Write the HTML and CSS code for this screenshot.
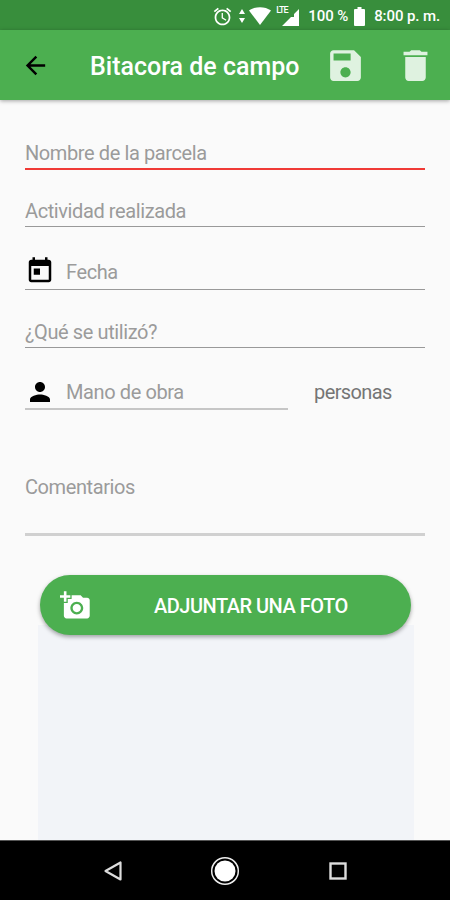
FILE: index.html
```html
<!DOCTYPE html>
<html lang="es">
<head>
    <meta charset="UTF-8">
    <meta name="viewport" content="width=device-width, initial-scale=1.0">
    <title>Bitacora de campo</title>
    <link rel="stylesheet" href="styles.css">
</head>
<body>
    <div class="status-bar">
        <svg class="icon-alarm" viewBox="0 0 24 24"><path d="M22 5.720l-4.600-3.860-1.290 1.530 4.600 3.860L22 5.720zM7.880 3.390L6.600 1.860 2 5.710l1.290 1.530 4.590-3.850zM12.500 8H11v6l4.750 2.850.75-1.230-4-2.370V8zM12 4c-4.970 0-9 4.030-9 9s4.020 9 9 9c4.970 0 9-4.030 9-9s-4.030-9-9-9zm0 16c-3.870 0-7-3.130-7-7s3.130-7 7-7 7 3.130 7 7-3.130 7-7 7z"/></svg>
        <svg class="icon-data" viewBox="0 0 6 14"><path d="M3 0l3 5H0zM3 14L0 9h6z"/></svg>
        <svg class="icon-wifi" viewBox="0 0 22 18"><path d="M0 3.500C6-1 16-1 22 3.500L11 18z"/></svg>
        <div class="signal">
            <span>LTE</span>
            <svg viewBox="0 0 17 17"><path d="M17 0v17H0l9-9h3V5z"/></svg>
        </div>
        <span class="battery-text">100 %</span>
        <svg class="icon-battery" viewBox="0 0 11 19"><path d="M3.500 0h4v2H10q1 0 1 1v15q0 1-1 1H1q-1 0-1-1V3q0-1 1-1h2.500z"/></svg>
        <span class="time">8:00 p. m.</span>
    </div>

    <header class="toolbar">
        <svg class="icon-back" viewBox="0 0 24 24"><path d="M20 11H7.830l5.590-5.590L12 4l-8 8 8 8 1.410-1.410L7.830 13H20v-2z"/></svg>
        <h1>Bitacora de campo</h1>
        <svg class="icon-action" viewBox="0 0 24 24"><path d="M17 3H5c-1.110 0-2 .9-2 2v14c0 1.100.89 2 2 2h14c1.100 0 2-.9 2-2V7l-4-4zm-5 16c-1.660 0-3-1.340-3-3s1.340-3 3-3 3 1.340 3 3-1.340 3-3 3zm3-10H5V5h10v4z"/></svg>
        <svg class="icon-action icon-delete" viewBox="0 0 24 24"><path d="M6 19c0 1.100.9 2 2 2h8c1.100 0 2-.9 2-2V7H6v12zM19 4h-3.500l-1-1h-5l-1 1H5v2h14V4z"/></svg>
    </header>

    <main class="content">
        <form class="form">
            <div class="field field-error">
                <input type="text" placeholder="Nombre de la parcela">
            </div>
            <div class="field field-activity">
                <input type="text" placeholder="Actividad realizada">
            </div>
            <div class="field field-date">
                <svg class="field-icon" viewBox="0 0 24 24"><path d="M19 3h-1V1h-2v2H8V1H6v2H5c-1.110 0-1.990.9-1.990 2L3 19c0 1.100.89 2 2 2h14c1.100 0 2-.9 2-2V5c0-1.100-.9-2-2-2zm0 16H5V8h14v11zM7 10h5v5H7z"/></svg>
                <input type="text" placeholder="Fecha">
            </div>
            <div class="field field-used">
                <input type="text" placeholder="¿Qué se utilizó?">
            </div>
            <div class="row">
                <div class="field field-people">
                    <svg class="field-icon" viewBox="0 0 24 24"><path d="M12 12c2.210 0 4-1.790 4-4s-1.790-4-4-4-4 1.790-4 4 1.790 4 4 4zm0 2c-2.670 0-8 1.340-8 4v2h16v-2c0-2.660-5.330-4-8-4z"/></svg>
                    <input type="text" placeholder="Mano de obra">
                </div>
                <span class="unit">personas</span>
            </div>
            <div class="field field-comments">
                <input type="text" placeholder="Comentarios">
            </div>
        </form>

        <button type="button" class="photo-button">
            <svg viewBox="0 0 24 24"><path d="M3 4V1h2v3h3v2H5v3H3V6H0V4h3zm3 6V7h3V4h7l1.830 2H21c1.100 0 2 .9 2 2v12c0 1.100-.9 2-2 2H5c-1.100 0-2-.9-2-2V10h3zm7 9c2.760 0 5-2.240 5-5s-2.240-5-5-5-5 2.240-5 5 2.240 5 5 5zm-3.200-5c0 1.770 1.430 3.200 3.200 3.200s3.200-1.430 3.200-3.200-1.430-3.200-3.200-3.200-3.200 1.430-3.200 3.200z"/></svg>
            <span>ADJUNTAR UNA FOTO</span>
        </button>
        <div class="photo-preview"></div>
    </main>

    <nav class="nav-bar">
        <svg viewBox="0 0 30 30"><path d="M23.500 6.500v17L8.500 15z" fill="none" stroke="#ddd" stroke-width="2.200" stroke-linejoin="round"/></svg>
        <svg viewBox="0 0 30 30"><circle cx="15" cy="15" r="13.300" fill="none" stroke="#eee" stroke-width="1.500"/><circle cx="15" cy="15" r="10.500" fill="#fff"/></svg>
        <svg viewBox="0 0 30 30"><rect x="7.500" y="7.500" width="15" height="15" fill="none" stroke="#ddd" stroke-width="2.400"/></svg>
    </nav>
</body>
</html>
```
FILE: styles.css
```css
* {
    box-sizing: border-box;
}
body {
    margin: 0;
    height: 900px;
    display: flex;
    flex-direction: column;
    overflow: hidden;
    background-color: #fafafa;
    font-family: Roboto, sans-serif;
}
svg {
    display: block;
    flex-shrink: 0;
}
.status-bar {
    height: 30px;
    padding: 2px 10px 0 0;
    display: flex;
    align-items: center;
    justify-content: flex-end;
    background-color: #388e3c;
    color: #fff;
    fill: #fff;
    font-size: 15px;
    font-weight: 500;
    letter-spacing: -0.1px;
    white-space: nowrap;
}
.icon-alarm {
    width: 21px;
    height: 21px;
}
.icon-data {
    width: 6px;
    height: 14px;
    margin-left: 6px;
}
.icon-wifi {
    width: 22px;
    height: 18px;
    margin-left: 4px;
}
.signal {
    width: 23px;
    height: 20px;
    margin-left: 5px;
    display: flex;
    align-items: flex-end;
}
.signal span {
    width: 6px;
    align-self: flex-start;
    font-size: 9px;
    line-height: 9px;
    letter-spacing: -1px;
}
.signal svg {
    width: 17px;
    height: 17px;
}
.battery-text {
    margin-left: 9px;
}
.icon-battery {
    width: 11px;
    height: 19px;
    margin-left: 6px;
}
.time {
    margin-left: 9px;
}
.toolbar {
    position: relative;
    height: 70px;
    padding-left: 21px;
    display: flex;
    align-items: center;
    background-color: #4caf50;
    box-shadow: 0 1px 4px rgba(0, 0, 0, 0.35);
}
.toolbar h1 {
    width: 235px;
    margin: 3px 0 0 40px;
    color: #fff;
    font-size: 25px;
    font-weight: 500;
    white-space: nowrap;
}
.icon-back {
    width: 29px;
    height: 29px;
}
.icon-action {
    width: 41px;
    height: 41px;
    fill: #dff2e0;
}
.icon-delete {
    margin-left: 29px;
}
.content {
    flex: 1;
    padding: 29px 25px 0;
    display: flex;
    flex-direction: column;
    min-height: 0;
}
.form {
    display: flex;
    flex-direction: column;
}
.field {
    display: flex;
    align-items: center;
    border-bottom: 1px solid #999;
}
.field input {
    flex: 1;
    min-width: 0;
    height: 30px;
    padding: 0;
    border: none;
    outline: none;
    background: none;
    font-family: inherit;
    font-size: 20px;
    letter-spacing: -0.4px;
}
.field input::placeholder {
    color: #9b9b9b;
}
.field-icon {
    width: 30px;
    height: 30px;
    margin-right: 11px;
}
.field-error {
    height: 41px;
    padding-top: 8px;
    border-bottom: 2px solid #f03a36;
}
.field-activity {
    height: 57px;
    padding-top: 26px;
}
.field-date {
    height: 63px;
    padding-top: 27px;
}
.field-date .field-icon {
    margin-top: -2px;
}
.field-used {
    height: 58px;
    padding-top: 27px;
}
.row {
    display: flex;
    align-items: flex-end;
}
.field-people {
    width: 263px;
    height: 62px;
    padding-top: 28px;
    border-bottom: 2px solid #c6c6c6;
}
.unit {
    margin: 0 0 6px 26px;
    color: #757575;
    font-size: 20px;
    letter-spacing: -0.6px;
}
.field-comments {
    height: 126px;
    padding-top: 31px;
    border-bottom: 3px solid #d0d0d0;
}
.photo-button {
    position: relative;
    width: 371px;
    height: 60px;
    margin: 39px 0 0 15px;
    padding: 0 0 0 20px;
    display: flex;
    align-items: center;
    border: none;
    border-radius: 30px;
    background-color: #4caf50;
    box-shadow: 0 2px 4px rgba(0, 0, 0, 0.35);
    color: #fff;
    fill: #fff;
    font-family: inherit;
    font-size: 20px;
    font-weight: 500;
    letter-spacing: -0.5px;
}
.photo-button svg {
    width: 31px;
    height: 31px;
}
.photo-button span {
    margin: 2px 0 0 63px;
}
.photo-preview {
    flex: 1;
    width: 376px;
    margin: -10px 0 0 13px;
    background-color: #f2f4f8;
}
.nav-bar {
    height: 60px;
    padding: 0 56px;
    display: flex;
    align-items: center;
    justify-content: space-around;
    border-top: 1px solid #555;
    background-color: #000;
}
.nav-bar svg {
    width: 30px;
    height: 30px;
}
```
